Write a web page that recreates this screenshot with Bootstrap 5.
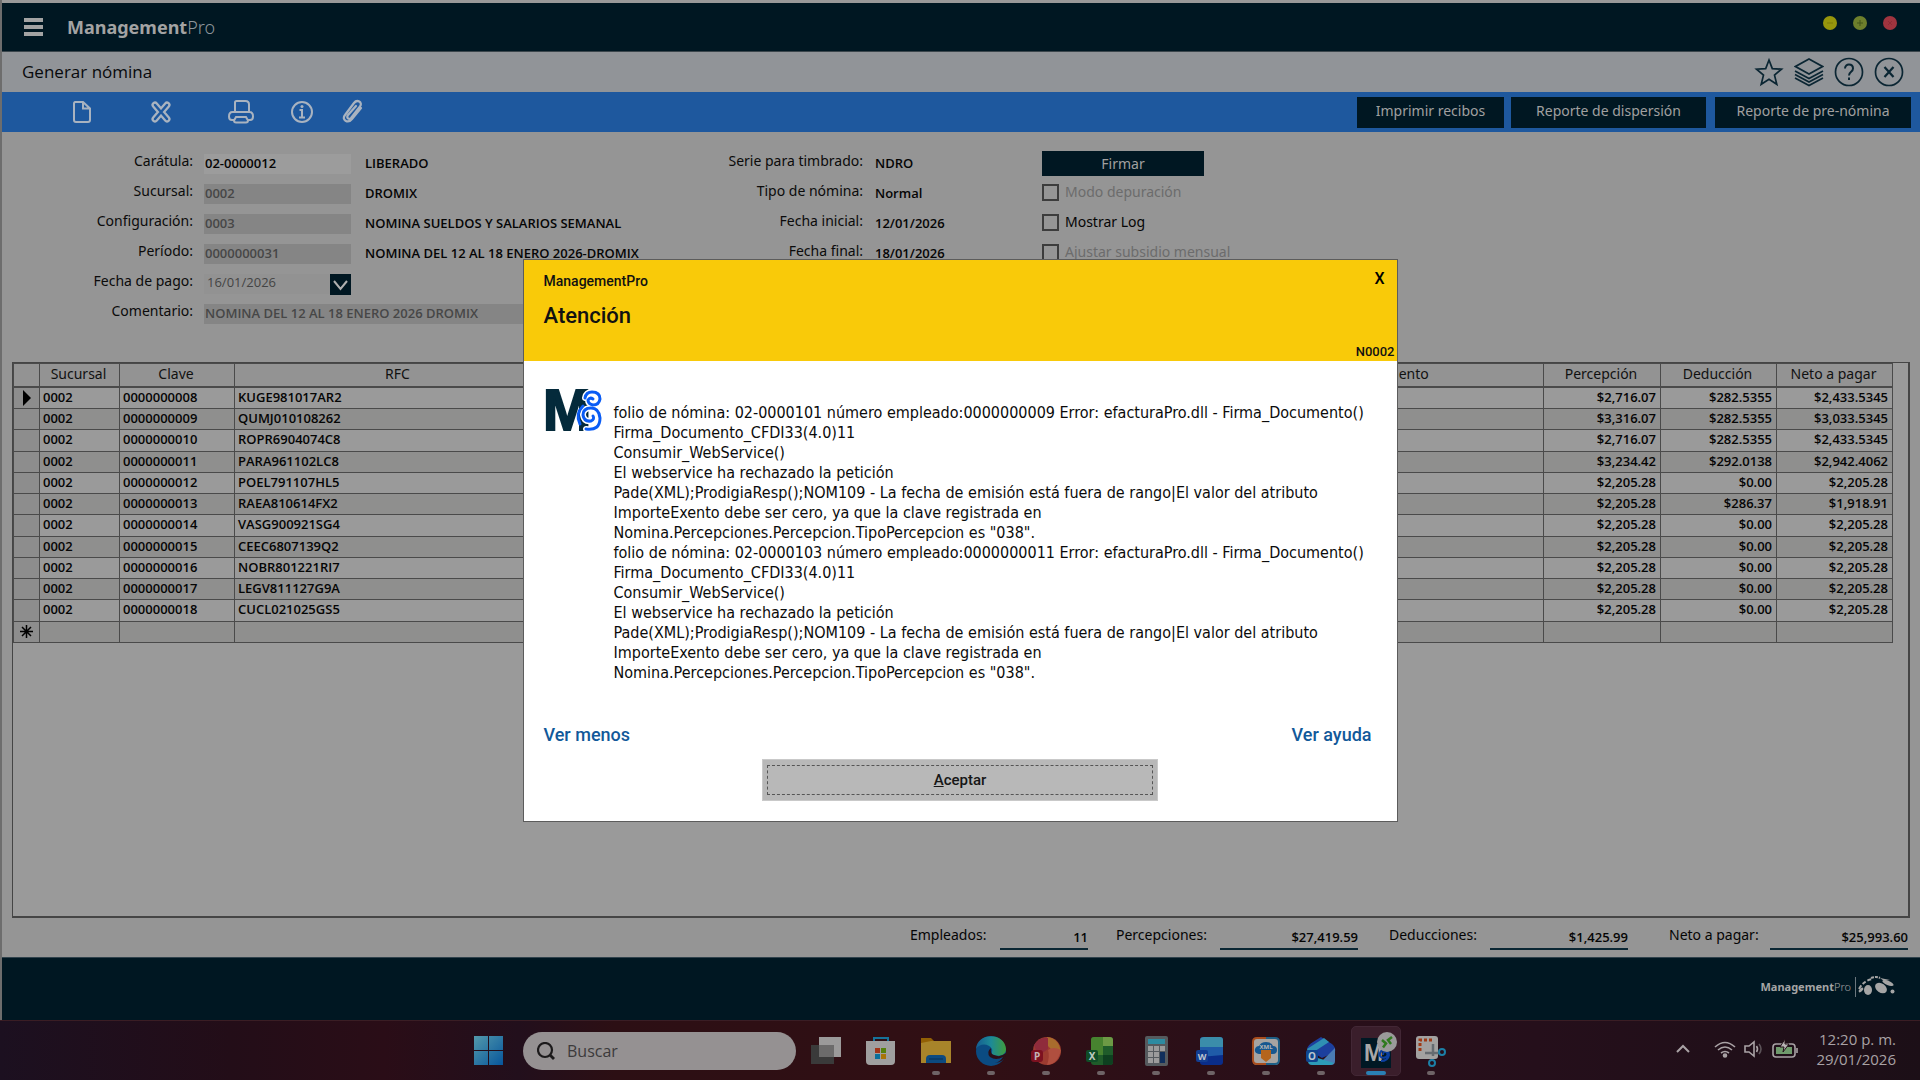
<!DOCTYPE html>
<html lang="es">
<head>
<meta charset="utf-8">
<meta name="viewport" content="width=device-width, initial-scale=1">
<title>ManagementPro - Generar nómina</title>
<link href="https://cdn.jsdelivr.net/npm/bootstrap@5.3.0/dist/css/bootstrap.min.css" rel="stylesheet">
<style>
:root{--ink:#001722;--panel:#959595;--blue:#1e589e;--line:#454545}
body{font-family:"Noto Sans","Open Sans",sans-serif;font-size:14px;line-height:20px;color:#050505;background:var(--panel)}
button,input{font-family:inherit}
.app-shell{border-left:2px solid #6d6d6d;background:var(--panel)}
.top-strip{height:3px;background:#999}
.brand-bar{height:49px;background:var(--ink);border-bottom:1px solid #3b464c;color:#a3a3a3;padding:0 23px 0 22px}
.brand-text{font-size:18px;line-height:24px;font-weight:700}
.brand-text span{font-weight:300;color:#8d959a}
.plain-btn{border:0;background:none;padding:0;line-height:0;color:inherit}
.win-dot{width:14px;height:14px;border-radius:50%}
.win-min{background:#97960c}
.win-max{background:#6e7f2c}
.win-close{background:#a0343f}
.title-bar{height:40px;background:#919498;padding:0 16px 0 20px}
.title-bar h1{font-family:"Open Sans",sans-serif;font-size:17px;line-height:24px;font-weight:400;color:#080a0c}
.title-icons{gap:10px;color:#0b2633}
.tool-bar{height:40px;background:var(--blue);padding:0 9px 0 63px;color:#a9b3c0}
.tool-w80{width:80px;text-align:left}
.tool-w60{width:60px;text-align:left}
.tool-w50{width:50px;text-align:left}
.dark-btn{background:var(--ink);color:#a0a0a0;border:0;border-radius:0;font-size:14px;line-height:20px;padding:0}
.tool-bar .dark-btn{height:31px;padding-bottom:3px}
.form-zone{padding:19px 0 0 0;height:230px}
.f-row{height:30px}
.f-row .f-lab{line-height:20px;text-align:right;color:#0b0b0b;white-space:nowrap}
.f-val{font-family:"Open Sans",sans-serif;font-weight:600;font-size:13px;line-height:20px;padding-top:2px;white-space:nowrap}
.f-input{font-family:"Open Sans",sans-serif;border:0;border-radius:0;height:20px;width:147px;margin-top:3px;padding:0 1px 2px;background:#858585;color:#474747;font-size:13px;font-weight:600;line-height:20px;flex-shrink:0}
.f-input.active-in{background:#9c9c9c;color:#050505}
.f-input.date-in{width:126px;background:#929292;font-weight:400;padding:0 0 4px 3px;color:#444}
.f-input.wide-in{width:448px}
.date-btn{width:21px;height:21px;background:var(--ink);margin-top:3px;color:#b0b0b0}
.col-a .f-lab{width:191px;margin-right:11px}
.col-a .f-val{margin-left:14px}
.col-a{width:650px}
.col-b .f-lab{width:211px;margin-right:12px}
.col-b{width:390px}
.chk{appearance:none;width:17px;height:17px;border:2px solid #3c3c3c;margin:0}
.sign-btn{width:162px;height:25px;margin-bottom:6px}
.chk-row{height:20px;margin-bottom:10px;gap:6px}
.chk-row.off{color:#6c6c6c}
.grid-box{border:1px solid var(--line);border-width:1px 2px 2px 1px;background:#9a9a9a;margin:0 10px;height:556px}
.pay-grid{table-layout:fixed;width:calc(100% - 15px);border-collapse:collapse}
.pay-grid th,.pay-grid td{border:1px solid #4a4a4a;padding:0 5px 2px 3px;font-family:"Open Sans",sans-serif;font-size:13px;line-height:18px;font-weight:600;white-space:nowrap;overflow:hidden}
.pay-grid td.text-end{padding-right:4px}
.pay-grid td{height:21px}
.pay-grid tbody tr:nth-child(4n+3) td{height:22px}
.pay-grid thead th{font-family:"Noto Sans",sans-serif;font-weight:400;text-align:center;font-size:14px;height:23px;padding-bottom:1px;background:#939393;border-bottom-width:2px;color:#111}
.pay-grid tbody tr:nth-child(even) td{background:#8f8f8e}
.pay-grid .sel{background:#8d8d8d!important;text-align:center;padding:0}
.totals{padding:7px 12px 0;height:39px}
.tot-lab{width:101px;margin-left:31px}
.tot-lab.lab-emp{width:90px}
.tot-lab.lab-per{width:104px;margin-left:28px}
.tot-lab.lab-net{margin-left:41px}
.tot-val{font-family:"Open Sans",sans-serif;border-bottom:2px solid #0b2734;height:25px;text-align:right;font-weight:600;font-size:13px;line-height:20px;padding-top:2px;width:138px}
.tot-val.val-emp{width:88px}
.foot-bar{height:63px;background:var(--ink);border-top:1px solid #30424c;padding:0 25px 4px;color:#a5a5a5}
.foot-logo{font-size:11px;line-height:16px;font-weight:700}
.foot-logo span{font-weight:300}
.task-bar{height:60px;background:linear-gradient(90deg,#1c1020 0,#230d18 12%,#2a0d17 20%,#220f1c 27%,#2c0f14 32%,#310f14 50%,#2b0f18 62%,#250f1b 80%,#1c0f17 100%);border-top:1px solid #3a1d24}
.task-apps{margin-left:464px;gap:5px}
.task-app{width:50px;height:50px;position:relative;border-radius:5px}
.task-app.on{background:#3a1e2b;border:1px solid #422735}
.run-mark::after{content:"";position:absolute;bottom:1px;left:50%;width:8px;height:4px;margin-left:-4px;border-radius:2px;background:#6e6366}
.on.run-mark::after{width:20px;margin-left:-10px;background:#2a80b4;bottom:0}
.find-box{width:273px;height:38px;border-radius:19px;background:#959192;padding:0 14px;gap:12px}
.find-box input{font-family:"Open Sans",sans-serif;background:none;border:0;outline:0;padding:0;font-size:16px;width:190px;color:#3c3a3b}
.find-box input::placeholder{color:#3c3a3b;opacity:1}
.tray{color:#a9a2a5;padding:0 24px 3px 0}
.tray time{font-family:"Open Sans",sans-serif;font-size:15px;line-height:20px;text-align:right}
.dlg-layer{position:fixed;inset:0;pointer-events:none}
.dlg{width:875px;border:1px solid #5c5c5c;background:#fff;pointer-events:auto;color:#0b0b0b}
.dlg-head{height:101px;background:#f9ca09;padding:11px 2px 0 20px;font-family:"Roboto",sans-serif;color:#111}
.dlg-app{font-size:14px;line-height:20px;font-weight:500}
.dlg-head h2{font-size:22px;line-height:24px;font-weight:500;margin:12px 0 14px}
.dlg-code{font-size:13px;line-height:20px;font-weight:500;text-align:right}
.dlg-x{border:0;background:none;font-size:16px;line-height:16px;font-weight:500;padding:0 10px 5px}
.dlg-body{padding:27px 20px 0 21px}
.dlg-logo{margin-right:11px}
.dlg-msg{font-family:"DejaVu Sans Condensed","DejaVu Sans",sans-serif;font-size:16px;line-height:20px;white-space:pre;padding-top:15px}
.dlg a{font-family:"Roboto",sans-serif;font-size:18px;line-height:24px;font-weight:500;color:#12599a;text-decoration:none}
.dlg-links{padding:40px 25px 0 20px}
.dlg-foot{padding:12px 0 20px}
.ok-btn{width:396px;height:42px;background:#b8b8b8;border:1px solid #c9c9c9;border-radius:0;padding:5px 4px;font-family:"Roboto",sans-serif;font-size:15px;font-weight:500;color:#161616}
.ok-btn span{display:block;border:1px dashed #555;line-height:28px;height:30px}
</style>
<script src="https://cdn.jsdelivr.net/npm/bootstrap@5.3.0/dist/js/bootstrap.bundle.min.js"></script>
</head>
<body class="d-flex flex-column min-vh-100">
<div class="app-shell flex-grow-1 d-flex flex-column">
  <div class="top-strip"></div>
  <header class="brand-bar d-flex align-items-center">
    <button class="plain-btn" aria-label="Menú"><svg width="19" height="18" fill="#a3a3a3"><path d="M0 0h19v4H0zM0 7h19v4H0zM0 14h19v4H0z"/></svg></button>
    <div class="brand-text ms-4">Management<span>Pro</span></div>
    <div class="ms-auto d-flex gap-3 pb-2">
      <button class="plain-btn win-dot win-min" aria-label="Minimizar"><svg width="14" height="14"><path d="M4 7h6" stroke="#7c7b09"/></svg></button>
      <button class="plain-btn win-dot win-max" aria-label="Maximizar"><svg width="14" height="14"><path d="M4 7h6M7 4v6" stroke="#45561a"/></svg></button>
      <button class="plain-btn win-dot win-close" aria-label="Cerrar"><svg width="14" height="14"><path d="M5 5l4 4M9 5l-4 4" stroke="#8d2c37"/></svg></button>
    </div>
  </header>
  <div class="title-bar d-flex align-items-center">
    <h1 class="m-0">Generar nómina</h1>
    <div class="title-icons ms-auto d-flex">
      <button class="plain-btn" aria-label="Favorito"><svg width="30" height="30" fill="none" stroke="currentColor" stroke-width="1.7"><path d="M15 3l3.300 8.600 9.200.6-7 5.900 2.300 9.200L15 22.300l-7.800 5 2.300-9.200-7-5.900 9.200-.6z"/></svg></button>
      <button class="plain-btn" aria-label="Capas"><svg width="30" height="30" fill="none" stroke="currentColor" stroke-width="1.7"><path d="M15 2l13.500 7.500L15 17 1.500 9.500zM1 14l14 7.500L29 14M1 17.500L15 25l14-7.500M1 21l14 7.500L29 21"/></svg></button>
      <button class="plain-btn" aria-label="Ayuda"><svg width="30" height="30" fill="none" stroke="currentColor" stroke-width="1.7"><circle cx="15" cy="15" r="13.500"/><path d="M11 11.500c0-5.500 8-5 8 0 0 3.500-4 3-4 7M15 20.500v2.500" stroke-width="2"/></svg></button>
      <button class="plain-btn" aria-label="Cerrar ventana"><svg width="30" height="30" fill="none" stroke="currentColor" stroke-width="1.7"><circle cx="15" cy="15" r="13.500"/><path d="M10.500 10l9 10M19.500 10l-9 10" stroke-width="2.200"/></svg></button>
    </div>
  </div>
  <nav class="tool-bar d-flex align-items-center">
    <button class="plain-btn tool-w80" aria-label="Nuevo"><svg width="30" height="26" fill="none" stroke="currentColor" stroke-width="2"><path d="M9.500 3H18l7 6.500V21q0 2-2 2H11q-2 0-2-2V4.500Q9 3 10.500 3M18 3v6.500h7"/></svg></button>
    <button class="plain-btn tool-w80" aria-label="Eliminar"><svg width="30" height="26" fill="none" stroke-linecap="round"><path d="M10 6l12 14M22 6L10 20" stroke="#a9b3c0" stroke-width="7"/><path d="M10 6l12 14M22 6L10 20" stroke="#1e589e" stroke-width="2.500"/></svg></button>
    <button class="plain-btn tool-w60" aria-label="Imprimir"><svg width="30" height="26" fill="none" stroke="currentColor" stroke-width="2"><path d="M10 13V3.500Q10 2 11.500 2h9Q24 2 24 5.500V13M9 21H7q-3 0-3-3.500Q4 13 7.500 13h17q3.500 0 3.500 4.500 0 3.500-3 3.500h-2M11 18h10l2 3.500q0 2-2 2H11q-2 0-2-2z"/></svg></button>
    <button class="plain-btn tool-w50" aria-label="Información"><svg width="30" height="26" fill="none" stroke="currentColor" stroke-width="2"><circle cx="17" cy="13" r="10"/><path d="M14.500 11H17v7M14 18.500h6" stroke-width="2"/><circle cx="17" cy="7.500" r="1.500" fill="currentColor" stroke="none"/></svg></button>
    <button class="plain-btn" aria-label="Adjuntar"><svg width="30" height="26" fill="none" stroke="currentColor" stroke-width="2.200" stroke-linecap="round" stroke-linejoin="round"><path d="M26 9l-9 11c-4 5-11 1-7-4L19 4c3-4 9-1 6 3.500L16 19c-2 2-5 0-3-3l8-9"/></svg></button>
    <div class="ms-auto d-flex">
      <button class="dark-btn" style="width:147px;margin-right:7px">Imprimir recibos</button>
      <button class="dark-btn" style="width:195px;margin-right:9px">Reporte de dispersión</button>
      <button class="dark-btn" style="width:196px">Reporte de pre-nómina</button>
    </div>
  </nav>
  <form class="form-zone d-flex">
    <div class="col-a">
      <div class="f-row d-flex"><label class="f-lab" for="caratula">Carátula:</label><input class="f-input active-in" id="caratula" value="02-0000012"><span class="f-val">LIBERADO</span></div>
      <div class="f-row d-flex"><label class="f-lab" for="sucursal">Sucursal:</label><input class="f-input" id="sucursal" value="0002" readonly><span class="f-val">DROMIX</span></div>
      <div class="f-row d-flex"><label class="f-lab" for="config">Configuración:</label><input class="f-input" id="config" value="0003" readonly><span class="f-val">NOMINA SUELDOS Y SALARIOS SEMANAL</span></div>
      <div class="f-row d-flex"><label class="f-lab" for="periodo">Período:</label><input class="f-input" id="periodo" value="0000000031" readonly><span class="f-val">NOMINA DEL 12 AL 18 ENERO 2026-DROMIX</span></div>
      <div class="f-row d-flex"><label class="f-lab" for="fpago">Fecha de pago:</label><input class="f-input date-in" id="fpago" value="16/01/2026" readonly><button type="button" class="plain-btn date-btn" aria-label="Elegir fecha"><svg width="21" height="21" fill="none" stroke="currentColor" stroke-width="2"><path d="M4 7l6.500 8L17 7"/></svg></button></div>
      <div class="f-row d-flex"><label class="f-lab" for="coment">Comentario:</label><input class="f-input wide-in" id="coment" value="NOMINA DEL 12 AL 18 ENERO 2026 DROMIX" readonly></div>
    </div>
    <div class="col-b">
      <div class="f-row d-flex"><span class="f-lab">Serie para timbrado:</span><span class="f-val">NDRO</span></div>
      <div class="f-row d-flex"><span class="f-lab">Tipo de nómina:</span><span class="f-val">Normal</span></div>
      <div class="f-row d-flex"><span class="f-lab">Fecha inicial:</span><span class="f-val">12/01/2026</span></div>
      <div class="f-row d-flex"><span class="f-lab">Fecha final:</span><span class="f-val">18/01/2026</span></div>
    </div>
    <div>
      <button type="button" class="dark-btn sign-btn d-block">Firmar</button>
      <div class="chk-row off d-flex align-items-center"><input type="checkbox" class="chk" id="c1" disabled><label for="c1">Modo depuración</label></div>
      <div class="chk-row d-flex align-items-center"><input type="checkbox" class="chk" id="c2"><label for="c2">Mostrar Log</label></div>
      <div class="chk-row off d-flex align-items-center"><input type="checkbox" class="chk" id="c3" disabled><label for="c3">Ajustar subsidio mensual</label></div>
    </div>
  </form>
  <div class="grid-box">
    <table class="pay-grid">
      <colgroup><col style="width:26px"><col style="width:80px"><col style="width:115px"><col style="width:328px"><col><col style="width:324px"><col style="width:117px"><col style="width:116px"><col style="width:116px"></colgroup>
      <thead><tr><th></th><th>Sucursal</th><th>Clave</th><th>RFC</th><th></th><th>Departamento</th><th>Percepción</th><th>Deducción</th><th>Neto a pagar</th></tr></thead>
      <tbody id="rows"></tbody>
    </table>
  </div>
  <div class="totals d-flex justify-content-end">
    <span class="tot-lab lab-emp">Empleados:</span><span class="tot-val val-emp">11</span>
    <span class="tot-lab lab-per">Percepciones:</span><span class="tot-val">$27,419.59</span>
    <span class="tot-lab">Deducciones:</span><span class="tot-val">$1,425.99</span>
    <span class="tot-lab lab-net">Neto a pagar:</span><span class="tot-val">$25,993.60</span>
  </div>
  <footer class="foot-bar d-flex align-items-center justify-content-end mt-auto">
    <div class="foot-logo">Management<span>Pro</span></div>
    <svg class="ms-1" width="40" height="22" fill="#a5a5a5"><path d="M0.500 1v20" stroke="#6b777e"/><path d="M4 13Q9 4 18 3" fill="none" stroke="#a5a5a5" stroke-width="2" stroke-dasharray="4 2"/><path d="M16 2q5-2 9 0" fill="none" stroke="#a5a5a5" stroke-width="2" stroke-dasharray="3 1"/><ellipse cx="6" cy="14" rx="3" ry="1.500" transform="rotate(-45 6 14)"/><ellipse cx="13" cy="14" rx="4" ry="5"/><ellipse cx="26" cy="12" rx="6.500" ry="4.500" transform="rotate(35 26 12)"/><ellipse cx="33" cy="7" rx="6" ry="2.200" transform="rotate(22 33 7)"/><path d="M25 2l10 2-6 1z"/><circle cx="37.500" cy="15.500" r="2"/></svg>
  </footer>
</div>

<div class="task-bar d-flex align-items-center">
  <div class="task-apps d-flex align-items-center">
    <button class="plain-btn task-app me-1" aria-label="Inicio"><svg width="30" height="30"><defs><linearGradient id="wg" x2="1" y2="1"><stop stop-color="#5399ab"/><stop offset="1" stop-color="#07569c"/></linearGradient></defs><path fill="url(#wg)" d="M0 0h14v14H0zM15 0h14v14H15zM0 15h14v14H0zM15 15h14v14H15z"/></svg></button>
    <label class="find-box d-flex align-items-center"><svg width="18" height="18" fill="none" stroke="#1c1a1b" stroke-width="2.200"><circle cx="8" cy="8" r="7"/><path d="M12.500 12.500L17 17" stroke-width="2.800"/></svg><input type="search" placeholder="Buscar" aria-label="Buscar"></label>
    <button class="plain-btn task-app" aria-label="Vista de tareas"><svg width="30" height="30"><path fill="#3a3a3a" d="M0 9h23v19H0z"/><path fill="#9b9a9a" d="M8 1h22v20H8z"/><path fill="#6c6b6b" d="M8 9h15v12H8z"/></svg></button>
    <button class="plain-btn task-app" aria-label="Tienda"><svg width="30" height="30"><path d="M8 8V2h14v6" fill="none" stroke="#16739b" stroke-width="2"/><path fill="#a09f9f" d="M0 5h29v20q0 4-4 4H4q-4 0-4-4z"/><path fill="#a23418" d="M9 12h5v5H9z"/><path fill="#56800b" d="M15 12h5v5h-5z"/><path fill="#0b6f9b" d="M9 18h5v5H9z"/><path fill="#a87408" d="M15 18h5v5h-5z"/></svg></button>
    <button class="plain-btn task-app run-mark" aria-label="Explorador"><svg width="30" height="30"><path fill="#926005" d="M0 2h10l3 3v8H0z"/><path fill="#a8842a" d="M0 7l10-2h20v22H0z"/><path fill="#0c4a80" d="M5 27v-4q0-4 4-4h12q4 0 4 4v4z"/><path d="M8 23h14" stroke="#062f55"/></svg></button>
    <button class="plain-btn task-app run-mark" aria-label="Edge"><svg width="30" height="30"><defs><linearGradient id="eg" x2="1"><stop stop-color="#155c92"/><stop offset=".5" stop-color="#1d8a97"/><stop offset="1" stop-color="#3f9c3d"/></linearGradient></defs><circle cx="15" cy="15" r="15" fill="#0b4b82"/><path fill="url(#eg)" d="M0 13C1-4 29-4 30 13c0 6-6 8-12 6-4-1-1-3-2-6C13 7 3 7 0 13z"/><path fill="#2c0f16" d="M15 12q-5 4-1 9 6 4 13 0-3 5-8 6 8-1 11-7v-3q-6 5-12 2-4-1-3-7z"/></svg></button>
    <button class="plain-btn task-app run-mark" aria-label="PowerPoint"><svg width="30" height="30"><circle cx="16" cy="15" r="14" fill="#9c3b30"/><path fill="#a86c2d" d="M16 1a14 14 0 0113 17Q22 16 17 10z"/><path fill="#8f2b3b" d="M3 9Q9 0 17 2v11L7 20z"/><path fill="#b04f3f" d="M17 14q5-4 13 0-3 14-14 15 3-9 1-15z"/><rect y="14" width="12" height="12" rx="3" fill="#7c1120"/><text x="6" y="24" font-size="10" font-weight="700" fill="#c4b4b6" text-anchor="middle">P</text></svg></button>
    <button class="plain-btn task-app run-mark" aria-label="Excel"><svg width="30" height="30"><rect x="5" y="1" width="22" height="28" rx="3" fill="#1f5c2a"/><path fill="#47832f" d="M8 1h9v18H5V4q0-3 3-3z"/><path fill="#6d9a45" d="M17 1h7q3 0 3 3v6H17z"/><path fill="#0e4020" d="M17 19h10v7q0 3-3 3h-7z"/><rect y="14" width="12" height="12" rx="2" fill="#0f4d27"/><text x="6" y="24" font-size="10" font-weight="700" fill="#bcc9bf" text-anchor="middle">X</text></svg></button>
    <button class="plain-btn task-app run-mark" aria-label="Calculadora"><svg width="30" height="30"><rect x="4" width="23" height="30" rx="2" fill="#555a5e"/><path fill="#2d8ba1" d="M7 3h17v5H7z"/><path fill="#9b9b9b" d="M7 10h5v5H7zM13 10h5v5h-5zM19 10h5v5h-5zM7 16h5v5H7zM13 16h5v5h-5zM7 22h5v5H7zM13 22h5v5h-5z"/><path fill="#102f5c" d="M19 16h5v11h-5z"/></svg></button>
    <button class="plain-btn task-app run-mark" aria-label="Word"><svg width="30" height="30"><rect x="4" y="1" width="23" height="28" rx="3" fill="#0a2d8a"/><path fill="#3b8daa" d="M8 1h16q3 0 3 3v7L4 13V4q0-3 4-3z"/><path fill="#1f5ba8" d="M4 11h23v8L4 21z"/><rect y="14" width="12" height="12" rx="2" fill="#123d91"/><text x="6" y="24" font-size="9" font-weight="700" fill="#bcc3cf" text-anchor="middle">W</text></svg></button>
    <button class="plain-btn task-app run-mark" aria-label="XML"><svg width="30" height="30"><rect x="2" y="2" width="26" height="27" rx="4" fill="#a6a4a2"/><path d="M15 28H6q-4 0-4-4V6q0-4 4-4h9" fill="none" stroke="#a84d1d" stroke-width="2"/><path d="M15 2h9q4 0 4 4v18q0 4-4 4h-9" fill="none" stroke="#1d5f86" stroke-width="2"/><path fill="#16578f" d="M8 18q-5-1-4-5 1-3 4-3 2-4 7-4t7 4q4 0 4 4t-4 4z"/><path fill="#b5651c" d="M10 14h10v8l-5 4-5-4z"/><text x="15" y="13" font-size="6" font-weight="700" fill="#b5b5b5" text-anchor="middle">XML</text></svg></button>
    <button class="plain-btn task-app run-mark" aria-label="Outlook"><svg width="30" height="30"><path fill="#1c3f9e" d="M1 13Q2 9 7 6l8-5 11 7q4 3 3 8L16 22z"/><path fill="#2f8fb3" d="M1 13L18 2l5 4L3 19z"/><path fill="#4a7cb3" d="M29 12v13q0 4-4 4H12z"/><path fill="#2d9cb8" d="M2 19l26 8q-2 2-4 2H6q-4 0-4-4z"/><rect y="14" width="12" height="12" rx="2" fill="#0f4690"/><text x="6" y="24" font-size="10" font-weight="700" fill="#bcc6cf" text-anchor="middle">O</text></svg></button>
    <button class="plain-btn task-app on run-mark" aria-label="ManagementPro"><svg width="42" height="44"><path fill="#001824" d="M6 9h30v30H6z"/><text x="9" y="32" font-size="23" font-weight="700" font-family="Liberation Sans Narrow,Liberation Sans,sans-serif" fill="#a8a8a8">M</text><path d="M28 26q0-4 3-3 3 2 0 5-4 2-6-1-1-4 3-6 6-1 6 5-1 6-8 6" fill="none" stroke="#0b3fa0" stroke-width="2"/><circle cx="32" cy="13" r="10" fill="#9a9a9a"/><path d="M27 11l4 3.500-3 4M37 8l-4 3 3 4" fill="none" stroke="#2f7a1e" stroke-width="2.500"/></svg></button>
    <button class="plain-btn task-app run-mark" aria-label="Recortes"><svg width="32" height="32"><rect x="1" y="1" width="22" height="23" rx="3" fill="#a3a1a0"/><path d="M5 16V5h13" fill="none" stroke="#a03a16" stroke-width="3" stroke-dasharray="3 2"/><path d="M18 9v12M10 18h14" stroke="#666b70" stroke-width="2.500"/><g fill="none" stroke="#1c7fa6" stroke-width="2"><circle cx="27" cy="17" r="3"/><circle cx="17" cy="28" r="3"/></g></svg></button>
  </div>
  <div class="tray ms-auto d-flex align-items-center">
    <svg width="14" height="10" fill="none" stroke="currentColor" stroke-width="2" class="me-4"><path d="M1 8l6-6 6 6"/></svg>
    <svg width="22" height="18" fill="none" stroke="currentColor" stroke-width="1.6" class="me-2"><path d="M1 7q10-9 20 0M4 10q7-6 14 0M7 13q4-3 8 0"/><circle cx="11" cy="15.500" r="1.500" fill="currentColor"/></svg>
    <svg width="20" height="18" fill="none" stroke="currentColor" stroke-width="1.6" class="me-2"><path d="M1 6h4l5-4v14l-5-4H1zM12.500 6q2 3 0 6"/><path d="M15 4q4 5 0 10" stroke="#5c5358"/></svg>
    <svg width="28" height="20" fill="none" stroke="currentColor" stroke-width="1.6" class="me-3"><rect x="1" y="5" width="22" height="13" rx="3"/><rect x="4" y="8" width="16" height="7" fill="#6f9a6c" stroke="none"/><path d="M25 9v5"/><path d="M13 0l-5 8h4l-1 5 6-8h-4z" fill="#b7b2b4" stroke="#241019" stroke-width="1"/></svg>
    <time>12:20 p. m.<br>29/01/2026</time>
  </div>
</div>

<div class="dlg-layer d-flex align-items-center justify-content-center">
  <div class="dlg" role="dialog" aria-labelledby="dlgTitle">
    <div class="dlg-head">
      <div class="d-flex justify-content-between"><span class="dlg-app">ManagementPro</span><button class="dlg-x" aria-label="Cerrar aviso">X</button></div>
      <h2 id="dlgTitle">Atención</h2>
      <div class="dlg-code">N0002</div>
    </div>
    <div class="dlg-body d-flex">
      <svg class="dlg-logo flex-shrink-0" width="58" height="44"><text x="-2" y="42" font-family="Liberation Sans Narrow,Liberation Sans,sans-serif" font-size="58" font-weight="700" fill="#042a3b" stroke="#042a3b" stroke-width="2">M</text><g fill="none" stroke-linecap="round"><path d="M41 41Q55 43 55 30 54 20 46 20q-8 0-8 7 1 7 8 6 4-2 2-5M40 10q1-6 7-6 8 0 8 7-1 6-7 6-5-1-5-5 2-3 5-1" stroke="#fff" stroke-width="6"/><path d="M41 41Q55 43 55 30 54 20 46 20q-8 0-8 7 1 7 8 6 4-2 2-5M40 10q1-6 7-6 8 0 8 7-1 6-7 6-5-1-5-5 2-3 5-1M35 36Q30 26 38 18" stroke="#0a5cf5" stroke-width="3"/></g></svg>
      <div class="dlg-msg">folio de nómina: 02-0000101 número empleado:0000000009 Error: efacturaPro.dll - Firma_Documento()
Firma_Documento_CFDI33(4.0)11
Consumir_WebService()
El webservice ha rechazado la petición
Pade(XML);ProdigiaResp();NOM109 - La fecha de emisión está fuera de rango|El valor del atributo
ImporteExento debe ser cero, ya que la clave registrada en
Nomina.Percepciones.Percepcion.TipoPercepcion es "038".
folio de nómina: 02-0000103 número empleado:0000000011 Error: efacturaPro.dll - Firma_Documento()
Firma_Documento_CFDI33(4.0)11
Consumir_WebService()
El webservice ha rechazado la petición
Pade(XML);ProdigiaResp();NOM109 - La fecha de emisión está fuera de rango|El valor del atributo
ImporteExento debe ser cero, ya que la clave registrada en
Nomina.Percepciones.Percepcion.TipoPercepcion es "038".</div>
    </div>
    <div class="dlg-links d-flex justify-content-between"><a href="#">Ver menos</a><a href="#">Ver ayuda</a></div>
    <div class="dlg-foot text-center"><button class="ok-btn"><span><u>A</u>ceptar</span></button></div>
  </div>
</div>
<script>
const data=[["08","KUGE981017AR2","$2,716.07","$282.5355","$2,433.5345"],["09","QUMJ010108262","$3,316.07","$282.5355","$3,033.5345"],["10","ROPR6904074C8","$2,716.07","$282.5355","$2,433.5345"],["11","PARA961102LC8","$3,234.42","$292.0138","$2,942.4062"],["12","POEL791107HL5","$2,205.28","$0.00","$2,205.28"],["13","RAEA810614FX2","$2,205.28","$286.37","$1,918.91"],["14","VASG900921SG4","$2,205.28","$0.00","$2,205.28"],["15","CEEC6807139Q2","$2,205.28","$0.00","$2,205.28"],["16","NOBR801221RI7","$2,205.28","$0.00","$2,205.28"],["17","LEGV811127G9A","$2,205.28","$0.00","$2,205.28"],["18","CUCL021025GS5","$2,205.28","$0.00","$2,205.28"]];
const arrow='<svg width="8" height="16" class="d-block mx-auto"><path d="M0 0l8 8-8 8z"/></svg>';
const star='<svg width="13" height="13" class="d-block mx-auto"><path d="M6.5 0v13M0 6.5h13M2 2l9 9M11 2l-9 9" stroke="#000" stroke-width="1.5"/></svg>';
document.getElementById('rows').innerHTML=data.map((r,i)=>`<tr><td class="sel">${i?'':arrow}</td><td>0002</td><td>00000000${r[0]}</td><td>${r[1]}</td><td></td><td></td>${r.slice(2).map(v=>`<td class="text-end">${v}</td>`).join('')}</tr>`).join('')+`<tr><td class="sel">${star}</td>${'<td></td>'.repeat(8)}</tr>`;
</script>
</body>
</html>
